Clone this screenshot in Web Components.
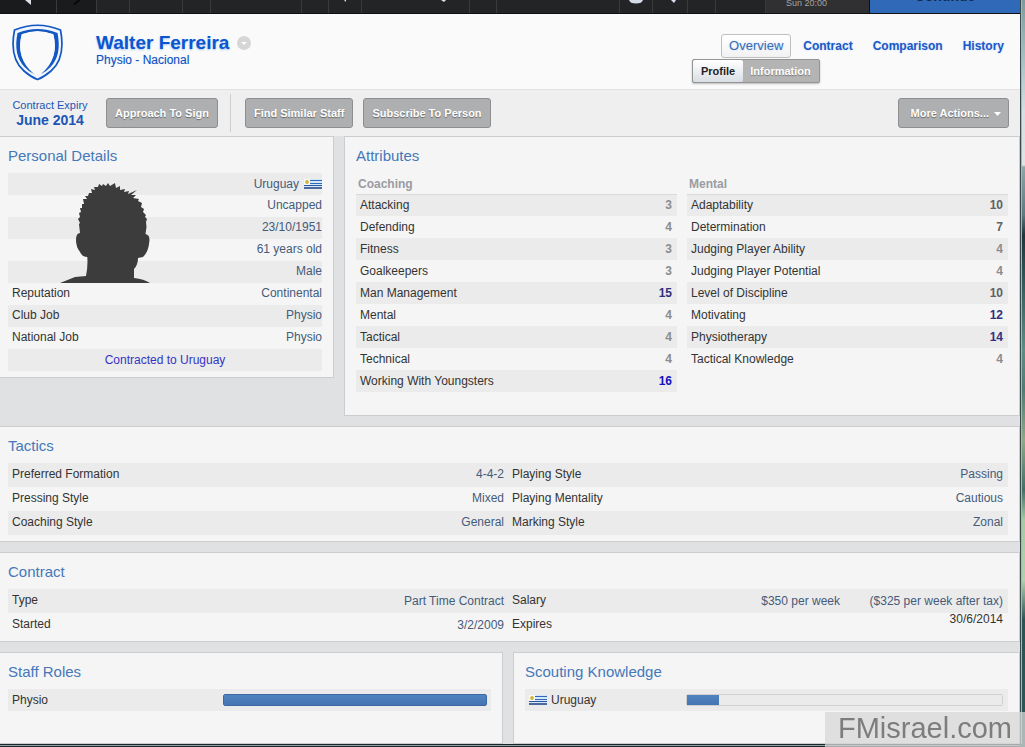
<!DOCTYPE html>
<html lang="en">
<head>
<meta charset="utf-8">
<title>Walter Ferreira - Overview</title>
<style>
html,body{margin:0;height:100%}
body{font:12px/22px "Liberation Sans",Arial,sans-serif;color:#333;
background:linear-gradient(180deg,#7d9b9c 0,#a8c0c2 60px,#d3dfe2 110px,#e2e4e2 165px,#8fa5a8 167px,#5c7880 215px,#22343c 235px,#35605f 290px,#5c8e84 350px,#4f7c72 390px,#8fa887 440px,#3f7066 490px,#a5cba3 520px,#b1d0ac 580px,#2b5555 620px,#2a5654 100%)}
</style>
</head>
<body>
<fm-app></fm-app>
<script>
function define(name, html, setup) {
  const template = document.createElement('template');
  template.innerHTML = html;
  customElements.define(name, class extends HTMLElement {
    connectedCallback() {
      if (this.shadowRoot) return;
      const root = this.attachShadow({ mode: 'open' });
      root.append(template.content.cloneNode(true));
      if (setup) setup(this, root);
    }
  });
}

define('fm-flag', `
<style>:host{display:inline-block;width:18px;height:10px}svg{display:block}</style>
<svg width="18" height="10" viewBox="0 0 18 10" aria-hidden="true">
<rect width="18" height="10" fill="#d3e6fa"/>
<path d="M6 1.500h12M6 4.500h12" stroke="#2f68b8"/><path d="M0 6.500h18" stroke="#2a57a0"/><path d="M0 9h18" stroke="#2c4a86" stroke-width="1.600"/>
<rect width="6" height="6" fill="#fafaf4"/><circle cx="3" cy="3" r="1.900" fill="#cfb53c"/></svg>`);

define('fm-topbar', `
<style>
:host{display:flex;height:14px;overflow:hidden;background:#232426;box-sizing:border-box;border-bottom:1px solid #111}
div{box-sizing:border-box;border-right:1px solid #3a3a3c;display:flex;justify-content:center;align-items:flex-end;flex:none}
svg{display:block;align-self:flex-start}
.dark{background:#1a1b1c}
.date{background:#303032;color:#a5a5a5;font-size:9px;line-height:11px;border-color:#111;padding-bottom:4px}
button{flex:1;border:0;padding:0 0 9px;background:#3069b7;color:#10294d;font:bold 14px/16px "Liberation Sans",Arial,sans-serif;display:flex;align-items:flex-end;justify-content:center}
</style>
<div class="dark" style="width:57px"><svg width="12" height="6"><path d="M3 0h6v5z" fill="#e1e1ea"/></svg></div>
<div class="dark" style="width:40px"><svg width="10" height="6"><path d="M1 4L6 0h3L3 5z" fill="#080808"/></svg></div>
<div style="width:33px"></div><div style="width:53px"></div><div style="width:28px"></div><div style="width:91px"></div>
<div style="width:27px"></div><div style="width:33px"><svg width="6" height="4"><path d="M2 0h2v2z" fill="#dde"/></svg></div>
<div style="width:108px;padding-left:56px"><svg width="8" height="4"><path d="M1 0h5l-2 2z" fill="#dde"/></svg></div>
<div style="width:27px"></div><div style="width:123px"></div>
<div style="width:33px"><svg width="14" height="6"><path d="M0 0q1 3.500 7 3.500T14 0z" fill="#d5dae8"/></svg></div>
<div style="width:35px;padding-left:8px"><svg width="8" height="4"><path d="M1 0h5l-2 3z" fill="#dde"/></svg></div>
<div style="width:28px"></div><div style="width:50px"></div>
<div class="date" style="width:104px;padding-right:22px">Sun 20:00</div>
<button type="button">Continue</button>`);

define('fm-header', `
<style>
:host{display:flex;min-height:76px;box-sizing:border-box;background:#fafafa;border-bottom:1px solid #e1e1e1;padding:0 8px 0 12px;color:#0f51c0}
.crest{flex:none;margin:10px 33px 0 0}
.who{padding-top:18px;flex:1}
h1{font-size:19px;line-height:22px;margin:0;display:flex;align-items:center;gap:8px;color:#0b55cf;text-shadow:0 1px 2px #aac6f5}
p{margin:0;line-height:12px;text-shadow:0 0 1px #b5cdf5}
h1 button{border:0;padding:0;background:none;display:flex}
.side{flex:0 0 320px;padding-top:20px;display:flex;flex-direction:column;align-items:flex-start;gap:1px}
nav{align-self:flex-end;display:flex;gap:4px}
a{box-sizing:border-box;height:24px;line-height:22px;border:1px solid transparent;padding:0 7px;color:#1a59c4;font-weight:bold;text-decoration:none;text-shadow:0 0 2px #bdd5ff;border-radius:3px}
a.on{border-color:#bfbfbf;font-weight:normal;font-size:13px;color:#386db3;background:linear-gradient(#fff,#f2f2f2)}
.tabs{display:flex;border:1px solid #949494;border-radius:2px;background:#b4b4b4;box-shadow:0 1px 2px #bbb;line-height:22px}
.tabs button{border:0;height:22px;padding:0 8px 0 7px;font:bold 11px/22px "Liberation Sans",Arial,sans-serif;background:none;color:#fff;text-shadow:0 1px 1px #777}
.tabs button.on{background:linear-gradient(#fff,#d9dee5);color:#222;text-shadow:none;border-radius:2px;padding:0 8px}
</style>
<svg class="crest" width="51" height="57" viewBox="0 0 51 57" aria-hidden="true">
<path d="M2.500 6Q25.500 -3.500 48.500 6Q54 34 39 47Q32 53 25.500 55.500Q19 53 12 47Q-3 34 2.500 6Z" fill="#f1f6fe" stroke="#1257c4" stroke-width="1.700"/>
<path fill="#1257c4" d="M5.500 9Q25.500 1 45.500 9Q50 31 38.500 43Q35 47 29 50Q48 34 41 10Q25.500 5.500 10 10Q3 34 22 50Q16 47 12.500 43Q1 31 5.500 9Z"/>
<path fill="#fafafa" d="M9.500 10.500Q25.500 3.500 41.500 10.500Q46 30 35 43Q31 48 25.500 51.500Q20 48 16 43Q5 30 9.500 10.500Z"/></svg>
<div class="who"><h1>Walter Ferreira<button type="button" aria-label="Person menu"><svg width="14" height="14"><circle cx="7" cy="7" r="7" fill="#d6d6d6"/><path d="M4 6h6l-3 3z" fill="#fff"/></svg></button></h1>
<p>Physio - Nacional</p></div>
<div class="side"><nav><a class="on" href="#overview">Overview</a><a href="#contract">Contract</a><a href="#comparison">Comparison</a><a href="#history">History</a></nav>
<div class="tabs"><button class="on" type="button">Profile</button><button type="button">Information</button></div></div>`);

define('fm-button', `
<style>
:host{display:block}
button{height:30px;box-sizing:border-box;border:1px solid #8e8e90;border-radius:3px;padding:0 8px;background:#aeafb1;color:#fff;font:bold 11px/28px "Liberation Sans",Arial,sans-serif;text-shadow:0 1px 1px #666;white-space:nowrap;display:flex;align-items:center;gap:5px}
:host([menu]) button{padding:0 7px 0 12px}
svg{display:none}:host([menu]) svg{display:block}
</style>
<button type="button"><slot></slot><svg width="7" height="5"><path d="M0 1h7l-3.500 4z" fill="#fff"/></svg></button>`);

define('fm-toolbar', `
<style>
:host{display:flex;align-items:center;height:46px;background:#efefef;padding:0 11px}
.expiry{width:78px;text-align:center;font-size:11px;line-height:15px;color:#1c55b5;margin-right:17px;white-space:nowrap}
b{display:block;font-size:14px}
.sep{width:1px;height:38px;background:#cecece;margin:0 14px 0 12px}
.gap{margin-right:10px}.end{margin-left:auto}
</style>
<div class="expiry">Contract Expiry<b>June 2014</b></div>
<fm-button>Approach To Sign</fm-button><span class="sep"></span>
<fm-button class="gap">Find Similar Staff</fm-button><fm-button>Subscribe To Person</fm-button>
<fm-button class="end" menu>More Actions...</fm-button>`);

define('fm-panel', `
<style>
:host{display:block;box-sizing:border-box;background:#f5f5f5;border:1px solid #cccdcf;padding:8px 11px 6px}
:host([flush]){border-left:0;padding-left:8px}
h2{margin:0 0 6px;font:15px/22px "Liberation Sans",Arial,sans-serif;color:#4578b9}
</style>
<h2></h2><slot></slot>`, (el, root) => { root.querySelector('h2').textContent = el.getAttribute('heading'); });

define('fm-personal', `
<style>
:host{display:block;position:relative}
table{width:100%;border-collapse:collapse}
th,td{padding:0 0 2px;height:20px;line-height:20px}
th{text-align:left;font-weight:normal;padding-left:4px;color:#333}
td{text-align:right;color:#455b7a}
tr:nth-child(odd){background:#ebebeb}
tr:first-child td,td[colspan]{padding:0;line-height:22px;height:22px}
fm-flag{vertical-align:-1px;margin-left:5px}
td[colspan]{text-align:center}
a{color:#3434c5;text-decoration:none}
svg{position:absolute;left:52px;top:7px}
</style>
<table>
<tr><th></th><td>Uruguay<fm-flag></fm-flag></td></tr><tr><th></th><td>Uncapped</td></tr><tr><th></th><td>23/10/1951</td></tr>
<tr><th></th><td>61 years old</td></tr><tr><th></th><td>Male</td></tr>
<tr><th>Reputation</th><td>Continental</td></tr><tr><th>Club Job</th><td>Physio</td></tr><tr><th>National Job</th><td>Physio</td></tr>
<tr><td colspan="2"><a href="#uruguay">Contracted to Uruguay</a></td></tr></table>
<svg width="91" height="103" viewBox="0 0 91 103" aria-hidden="true"><path fill="#3c3c3c" d="M0 103L15 97L26 96Q28 87 27.300 77Q22 77 20 72Q16 67 16 60Q16 53 20 53L19 44L20 43L18 39L20 37L19 33L21 32L20 28L22 28L22 24L24 24L23 19L27 19L25 16L28 16L29 13L32 13L31 9L35 10L34 7L38 7L39 4L42 6L43 4L46 6L48 3L50 6L55 3L56 8L60 6L60 10L65 9L64 12L69 11L68 14L77 10L71 15L76 15L73 18L79 19L78 21L82 23L81 27L84 29L83 32L86 35L85 37L87 39L86 42L86.500 47L85.500 54Q90 55 89.400 61Q88.500 72 83 77L78 78Q78 85 74 89L74 98Q84 99 90 103Z"/></svg>`);

define('fm-attributes', `
<style>
:host{display:block;flex:1}
table{width:100%;border-collapse:collapse}
thead th{height:20px;line-height:20px;text-align:left;color:#999ca2;padding:1px 2px 0}
tbody th,td{height:22px;line-height:22px;padding:0 4px;font-weight:normal;text-align:left;color:#333}
tbody td{text-align:right;font-weight:bold;padding-right:5px;width:30px}
tbody tr:nth-child(odd){background:#ebebeb}
tbody tr:first-child{box-shadow:inset 0 1px #dadada}
tbody td.low{color:#8c8c8c}tbody td.mid{color:#606165}tbody td.high{color:#31317e}tbody td.top{color:#1212bf}
</style>
<table><thead><tr><th colspan="2"></th></tr></thead><tbody></tbody></table>`, (el, root) => {
  root.querySelector('thead th').textContent = el.getAttribute('group');
  const body = root.querySelector('tbody');
  el.getAttribute('values').split(',').forEach(pair => {
    const [name, value] = pair.split(':');
    const row = body.insertRow();
    const th = document.createElement('th');
    th.scope = 'row'; th.textContent = name; row.append(th);
    const td = row.insertCell();
    td.textContent = value;
    td.className = value > 15 ? 'top' : value > 10 ? 'high' : value > 5 ? 'mid' : 'low';
  });
});

const wideTable = `
:host{display:block}
table{width:100%;border-collapse:collapse;table-layout:fixed}
tr:nth-child(odd){background:#ebebeb}
th,td{height:22px;line-height:22px;padding:0 4px 2px;font-weight:normal;text-align:left;color:#333;white-space:nowrap}
td{text-align:right;color:#455b7a}td:last-child{padding-right:5px}`;

define('fm-tactics', `<style>${wideTable}</style>
<table><tr><th>Preferred Formation</th><td>4-4-2</td><th>Playing Style</th><td>Passing</td></tr>
<tr><th>Pressing Style</th><td>Mixed</td><th>Playing Mentality</th><td>Cautious</td></tr>
<tr><th>Coaching Style</th><td>General</td><th>Marking Style</th><td>Zonal</td></tr></table>`);

define('fm-contract', `<style>${wideTable}
td{height:24px;line-height:24px;padding-bottom:0}
td.expires{vertical-align:top;line-height:12px;color:#333}
.net{width:164px}.gross{width:180px}</style>
<table><colgroup><col style="width:25%"><col style="width:25%"><col><col class="gross"><col class="net"></colgroup>
<tr><th>Type</th><td>Part Time Contract</td><th>Salary</th><td>$350 per week</td><td>($325 per week after tax)</td></tr>
<tr><th>Started</th><td>3/2/2009</td><th>Expires</th><td class="expires" colspan="2">30/6/2014</td></tr></table>`);

define('fm-level', `
<style>
:host{display:grid;grid-template-columns:var(--label) 1fr;align-items:center;background:#ebebeb;height:22px;padding:0 5px 0 4px}
:host([full]){padding-right:4px}
label{display:flex;align-items:center;gap:4px}
progress{appearance:none;-webkit-appearance:none;display:block;width:100%;height:12px;box-sizing:border-box;border:1px solid #cfcfcf;border-radius:2px;background:#ebebeb}
progress::-webkit-progress-bar{background:#ebebeb;border-radius:1px}
progress::-webkit-progress-value{background:linear-gradient(#4f83c1,#4475b2)}
:host([full]) progress{border-color:#3c69a4}
</style>
<label for="bar"><slot></slot></label><progress id="bar" max="100"></progress>`, (el, root) => { root.querySelector('progress').value = +el.getAttribute('value'); });

define('fm-watermark', `
<style>:host{position:fixed;right:0;bottom:0;width:200px;height:35px;box-sizing:border-box;background:rgba(215,215,215,.75);font-size:29px;line-height:33px;color:#7d7d7d;text-align:center}</style>FMisrael.com`);

define('fm-app', `
<style>
:host{display:flex;flex-direction:column;min-height:100vh;box-sizing:border-box;padding:0 5px 3px 0}
main{flex:1;display:flex;flex-direction:column;gap:10px;background:#e0e1e3;box-shadow:0 1px #1c2527,1px 0 #39494b,0 2px #91a0a2,0 3px #1c2b2d,2px 0 #aab8b8}
.row{display:grid;gap:10px;align-items:start}
.profile{grid-template-columns:334fr 676fr}
.knowledge{grid-template-columns:503fr 507fr;flex:1;align-items:stretch}
.attributes{display:flex;gap:10px;margin-bottom:17px}
fm-header,fm-toolbar,fm-topbar{box-shadow:1px 0 #39494b,2px 0 #aab8b8}
.terms{padding-bottom:4px}
</style>
<fm-topbar></fm-topbar><fm-header></fm-header><fm-toolbar></fm-toolbar>
<main>
<div class="row profile">
<fm-panel flush heading="Personal Details"><fm-personal></fm-personal></fm-panel>
<fm-panel heading="Attributes"><div class="attributes">
<fm-attributes group="Coaching" values="Attacking:3,Defending:4,Fitness:3,Goalkeepers:3,Man Management:15,Mental:4,Tactical:4,Technical:4,Working With Youngsters:16"></fm-attributes>
<fm-attributes group="Mental" values="Adaptability:10,Determination:7,Judging Player Ability:4,Judging Player Potential:4,Level of Discipline:10,Motivating:12,Physiotherapy:14,Tactical Knowledge:4"></fm-attributes>
</div></fm-panel></div>
<fm-panel flush heading="Tactics"><fm-tactics></fm-tactics></fm-panel>
<fm-panel flush class="terms" heading="Contract"><fm-contract></fm-contract></fm-panel>
<div class="row knowledge">
<fm-panel flush heading="Staff Roles"><fm-level full value="100" style="--label:211px">Physio</fm-level></fm-panel>
<fm-panel heading="Scouting Knowledge"><fm-level value="10" style="--label:157px"><fm-flag></fm-flag>Uruguay</fm-level></fm-panel>
</div>
</main>
<fm-watermark></fm-watermark>`);
</script>
</body>
</html>
